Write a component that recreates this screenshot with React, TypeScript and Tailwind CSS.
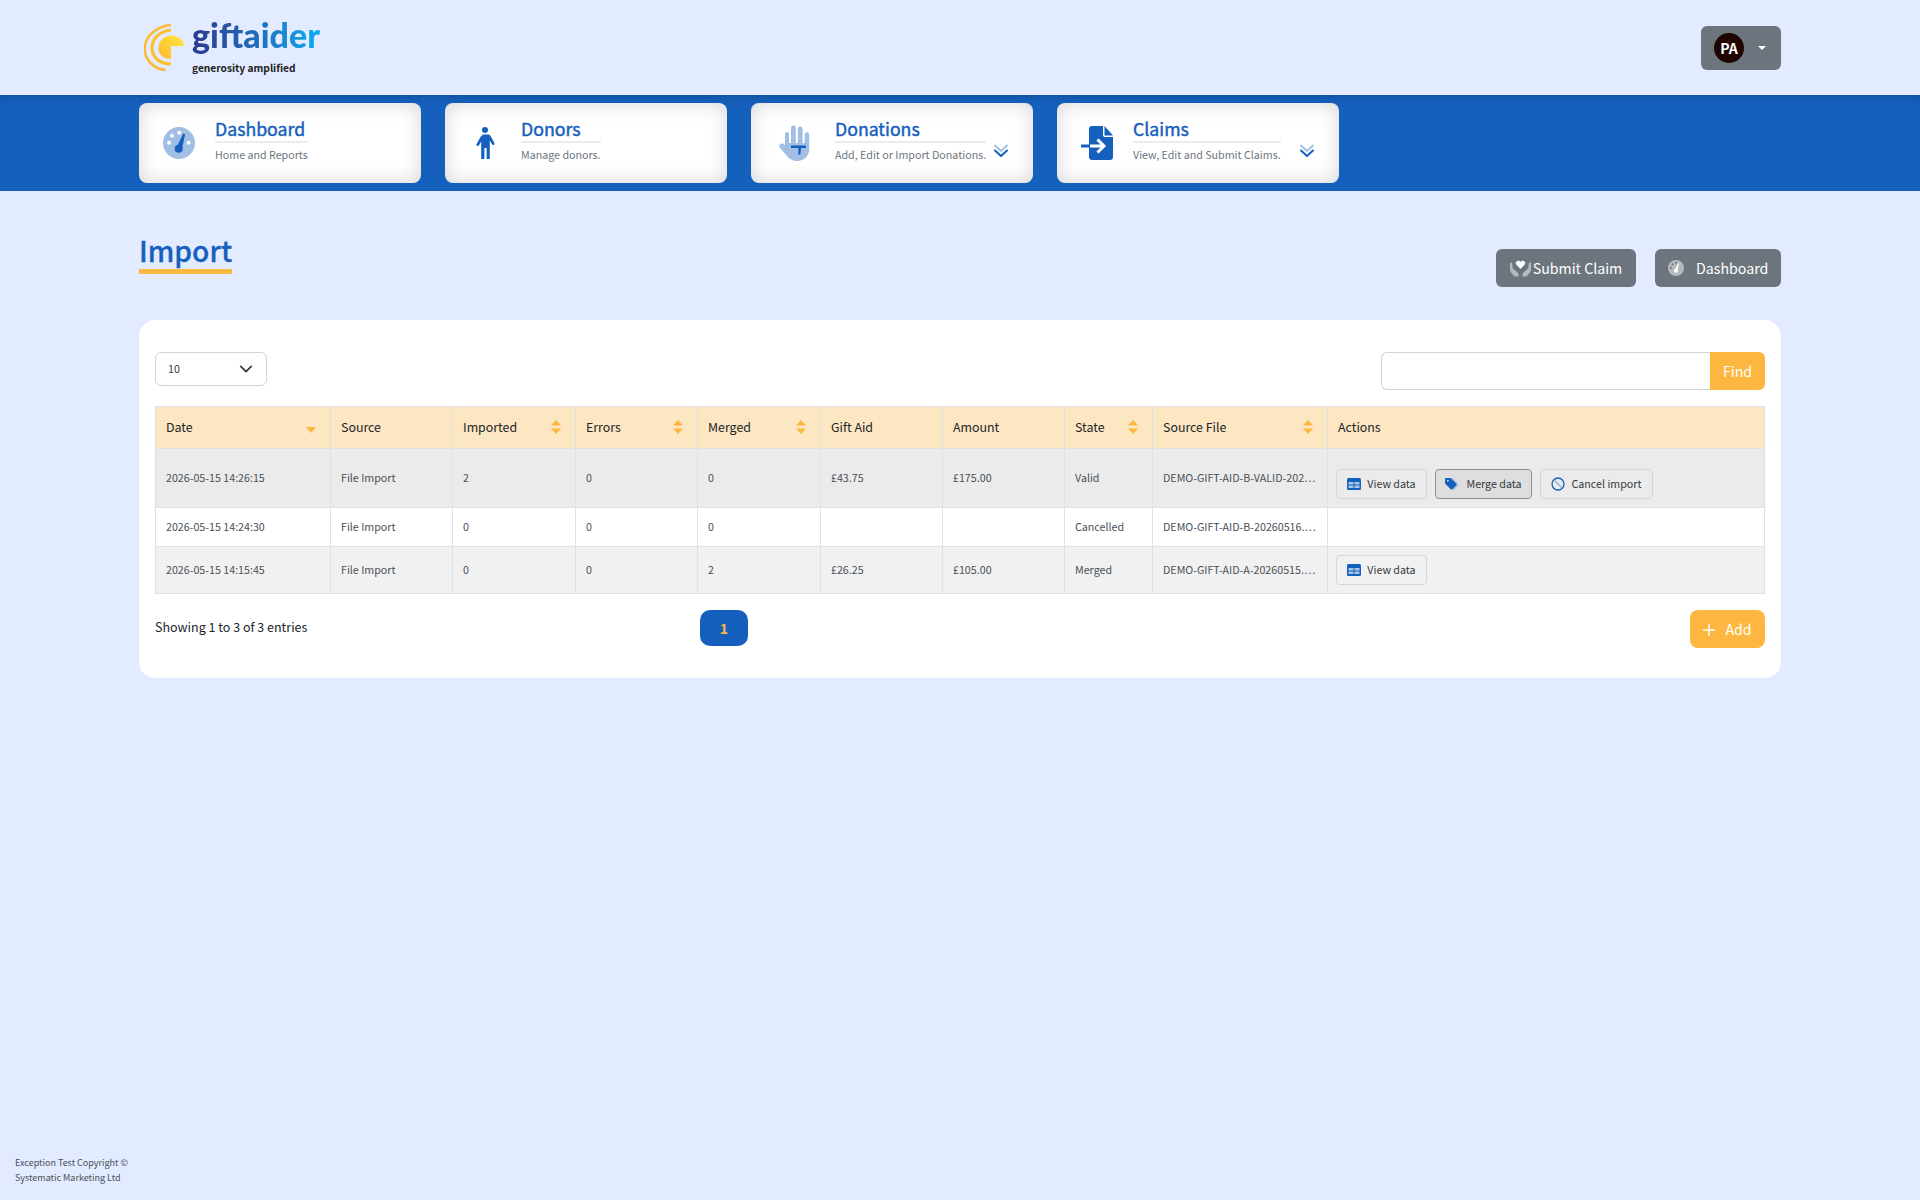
const font = "font-['Noto_Sans_CJK_SC','Noto_Sans',sans-serif]";

function Gauge({ className }: { className?: string }) {
  return (
    <svg viewBox="0 0 32 32" className={className}>
      <circle cx="16" cy="16" r="16" fill="currentColor" opacity="0.4" />
      <circle cx="9" cy="8.700" r="2" fill="#fff" />
      <circle cx="16.300" cy="5.700" r="2" fill="#fff" />
      <circle cx="6" cy="15.700" r="2" fill="#fff" />
      <circle cx="25.600" cy="15.700" r="2" fill="#fff" />
      <circle cx="15.700" cy="21.700" r="4" fill="currentColor" />
      <path d="M13.500 20.500 20.300 6.500 22.200 7.200 18.800 22.500Z" fill="currentColor" />
    </svg>
  );
}

function Person({ className }: { className?: string }) {
  return (
    <svg viewBox="0 0 20 32" className={className} fill="currentColor">
      <circle cx="10" cy="3" r="3" />
      <path d="M6.800 7.400h6.400c1 0 1.700.5 2.200 1.300l4 7.200c.4.800.2 1.600-.5 2s-1.500.1-1.900-.6l-2.200-3.700V31a1.600 1.600 0 0 1-3.200.2V21H9.400v10.200A1.600 1.600 0 0 1 6.200 31V14.600L4 18.300c-.4.700-1.200 1-1.900.6s-.9-1.200-.5-2l4-7.200c.5-.8 1.200-1.300 2.200-1.300Z" />
    </svg>
  );
}

function Hand({ className }: { className?: string }) {
  return (
    <svg viewBox="0 0 32 36" className={className}>
      <path
        opacity="0.4"
        fill="currentColor"
        d="M6 9a2 2 0 0 1 4 0v9h2V3a2.400 2.400 0 0 1 4.800 0v15h2V4a2.400 2.400 0 0 1 4.800 0v14h2V9.500a2.300 2.300 0 0 1 4.600 0V24c0 7-5 12-12 12-5 0-8.500-2.500-11-6L1 23c-1-1.500-.8-3 .5-4s3-.5 4 .7l.5.6Z"
      />
      <path fill="currentColor" d="M12 20.500h15v2.500h-5l-.6 6.500h-2.300l.4-6.500H12Z" />
    </svg>
  );
}

function FileIn({ className }: { className?: string }) {
  return (
    <svg viewBox="0 0 32 34" className={className}>
      <path fill="#1560bd" d="M11 0h11v9a2 2 0 0 0 2 2h8v20a3 3 0 0 1-3 3H11a3 3 0 0 1-3-3V3a3 3 0 0 1 3-3Z" />
      <path fill="#1560bd" d="M23.500 0 32 9.500h-8.500Z" />
      <rect x="0" y="18.500" width="9" height="3" fill="#1560bd" />
      <path d="M9 20h13M16.500 13.500 23 20l-6.500 6.500" fill="none" stroke="#fff" strokeWidth="3" />
    </svg>
  );
}

function DoubleChevron() {
  return (
    <svg viewBox="0 0 16 16" className="w-[16px] h-[16px]" fill="none" strokeWidth="2" strokeLinecap="round" strokeLinejoin="round">
      <path d="M2 2.500 8 8l6-5.500" stroke="#a4c0e6" />
      <path d="M2 7.500 8 13l6-5.500" stroke="#1560bd" />
    </svg>
  );
}

function NavCard({ icon, title, sub, chevron, wide }: { icon: React.ReactNode; title: string; sub: string; chevron?: boolean; wide?: boolean }) {
  return (
    <div className="w-[282px] h-[80px] bg-white rounded-[8px] shadow-[inset_0_0_20px_rgba(0,0,0,0.16)] flex items-center">
      <div className={"flex justify-center text-[#1560bd] " + (wide ? "w-[84px] pl-[3px]" : "w-[76px] pl-[4px]")}>{icon}</div>
      <div className="flex flex-col mt-[-6px]">
        <div className="text-[17.7px] leading-[22px] [-webkit-text-stroke:0.45px_#1560bd] text-[#1560bd] border-b-2 border-[#ececec] h-[26px]">{title}</div>
        <div className="text-[10.7px] leading-[16px] text-[#6c757d] whitespace-nowrap mt-[4px]">{sub}</div>
      </div>
      {chevron && <div className="ml-auto mr-[24px] mt-[16px]"><DoubleChevron /></div>}
    </div>
  );
}

function SortBoth() {
  return (
    <svg viewBox="0 0 10 14" className="w-[10px] h-[14px]" fill="#fdb740">
      <path d="M5 0 10 5.500H0Z" />
      <path d="M5 14 0 8.500H10Z" />
    </svg>
  );
}

function TableIcon() {
  return (
    <svg viewBox="0 0 14 12" className="w-[14px] h-[12px]">
      <rect width="14" height="12" rx="1.500" fill="#1560bd" />
      <rect x="1.500" y="4" width="5" height="2.500" fill="#a9c6ea" />
      <rect x="7.500" y="4" width="5" height="2.500" fill="#a9c6ea" />
      <rect x="1.500" y="7.500" width="5" height="2.500" fill="#a9c6ea" />
      <rect x="7.500" y="7.500" width="5" height="2.500" fill="#a9c6ea" />
    </svg>
  );
}

function TagIcon() {
  return (
    <svg viewBox="0 0 16 14" className="w-[15px] h-[13px]">
      <path d="M4 0h3l7 7-5 6" fill="none" stroke="#a4c0e6" strokeWidth="1.400" />
      <path d="M0 1a1 1 0 0 1 1-1h5l6 6a1.500 1.500 0 0 1 0 2l-4 4a1.500 1.500 0 0 1-2 0L0 6Z" fill="#1560bd" />
      <circle cx="3" cy="3" r="1" fill="#dedede" />
    </svg>
  );
}

function BanIcon() {
  return (
    <svg viewBox="0 0 14 14" className="w-[14px] h-[14px]" fill="none">
      <circle cx="7" cy="7" r="6" stroke="#1560bd" strokeWidth="1.300" />
      <path d="M3 3l8 8" stroke="#8db0de" strokeWidth="1.300" />
    </svg>
  );
}

function ActionBtn({ icon, label, active, className }: { icon: React.ReactNode; label: string; active?: boolean; className: string }) {
  return (
    <div
      className={
        "h-[30px] rounded-[4px] border flex items-center justify-center gap-[6px] text-[10.7px] text-[#343a40] " +
        (active ? "bg-[#dedede] border-[#8f8f8f] " : "border-[#d3d6da] ") +
        className
      }
    >
      {icon}
      <span>{label}</span>
    </div>
  );
}

const th = "border border-[#dee2e6] bg-[#fde6c2] text-[12.4px] font-normal text-[#212529] text-left px-[10px] p-0";
const td = "border border-[#dee2e6] text-[10.7px] text-[#495057] px-[10px] pt-[1px] pb-0 whitespace-nowrap";

function Head({ label, sort }: { label: string; sort?: "both" | "down" }) {
  return (
    <th className={th}>
      <div className="flex items-center justify-between pr-[4px]">
        <span>{label}</span>
        {sort === "both" && <SortBoth />}
        {sort === "down" && (
          <svg viewBox="0 0 10 6" className="w-[10px] h-[6px] mt-[6px]" fill="#fdb740">
            <path d="M5 6 0 0H10Z" />
          </svg>
        )}
      </div>
    </th>
  );
}

const rows = [
  { bg: "bg-[#ebebeb]", h: "h-[59px]", date: "2026-05-15 14:26:15", imp: "2", err: "0", mer: "0", gift: "£43.75", amt: "£175.00", state: "Valid", file: "DEMO-GIFT-AID-B-VALID-202…", full: true, view: true },
  { bg: "bg-white", h: "h-[39px]", date: "2026-05-15 14:24:30", imp: "0", err: "0", mer: "0", gift: "", amt: "", state: "Cancelled", file: "DEMO-GIFT-AID-B-20260516.…", full: false, view: false },
  { bg: "bg-[#f1f1f1]", h: "h-[47px]", date: "2026-05-15 14:15:45", imp: "0", err: "0", mer: "2", gift: "£26.25", amt: "£105.00", state: "Merged", file: "DEMO-GIFT-AID-A-20260515.…", full: false, view: true },
];

export default function App() {
  return (
    <div className={"min-h-[1200px] bg-[#e2ebff] flex flex-col " + font}>
      <header className="h-[95px] flex items-center justify-between px-[139px]">
        <div className="flex items-start ml-[5px] h-[47px]">
          <svg viewBox="0 0 40 47" className="w-[40px] h-[47px]">
            <defs>
              <linearGradient id="lg" x1="0" y1="1" x2="1" y2="0">
                <stop offset="0" stopColor="#fdb52e" />
                <stop offset="1" stopColor="#fde93f" />
              </linearGradient>
            </defs>
            <path d="M27 .6C12 3 .8 12 .8 25c0 11 9 20 21 21" fill="none" stroke="#fcbb38" strokeWidth="2.600" />
            <path d="M27 6C15 7.500 8 15 8 24s7 15.500 19 16" fill="none" stroke="#fcc02f" strokeWidth="3.200" />
            <path d="M27 11.500c-7 0-12.500 5.500-12.500 12.500S20 35 27 35V22h13c0-6-6-10.500-13-10.500Z" fill="url(#lg)" />
          </svg>
          <div className="ml-[8px] flex flex-col mt-[-8px]">
            <div className="font-['Lato','Noto_Sans',sans-serif] text-[34px] leading-[38px] font-black bg-gradient-to-r from-[#2b3990] via-[#1f6cba] to-[#05aef0] bg-clip-text text-transparent whitespace-nowrap w-fit">
              giftaider
            </div>
            <div className="text-[10.2px] leading-[14px] font-bold text-[#222] mt-[7px]">generosity amplified</div>
          </div>
        </div>
        <div className="w-[80px] h-[44px] bg-[#6c757d] rounded-[6px] flex items-center pl-[13px] mt-[1px]">
          <div className="w-[30px] h-[30px] rounded-full bg-[#1f0500] text-white text-[14px] font-bold flex items-center justify-center">PA</div>
          <div className="ml-[14px] w-0 h-0 border-x-[4px] border-x-transparent border-t-[4px] border-t-white" />
        </div>
      </header>

      <nav className="h-[96px] bg-[#1560bd] shadow-[inset_0_8px_8px_-6px_rgba(0,0,0,0.18)] flex items-center px-[139px] gap-[24px]">
        <NavCard icon={<Gauge className="w-[32px] h-[32px]" />} title="Dashboard" sub="Home and Reports" />
        <NavCard icon={<Person className="w-[20px] h-[32px]" />} title="Donors" sub="Manage donors." />
        <NavCard wide icon={<Hand className="w-[32px] h-[36px]" />} title="Donations" sub="Add, Edit or Import Donations." chevron />
        <NavCard icon={<FileIn className="w-[32px] h-[34px]" />} title="Claims" sub="View, Edit and Submit Claims." chevron />
      </nav>

      <main className="px-[139px] flex-1">
        <div className="flex justify-between items-start mt-[41px] h-[88px]">
          <h1 className="text-[28.2px] leading-[35px] pb-[2px] font-medium [-webkit-text-stroke:0.3px_#1560bd] text-[#1560bd] border-b-[5px] border-[#fdb93d]">Import</h1>
          <div className="flex gap-[19px] mt-[17px]">
            <div className="w-[140px] h-[38px] pt-[1px] rounded-[6px] bg-[#6c757d] text-white text-[14.2px] flex items-center justify-center gap-[2px]">
              <svg viewBox="0 0 22 18" className="w-[21px] h-[18px] mt-[-1px]">
                <path d="M0 3.500c1-.5 2 0 2.300 1l.7 5 3.500 2.800c1.500 1 2.500 2.500 2.500 4V18H5l-3-3-2-3.500Z" fill="#b4b9bd" />
                <path d="M22 3.500c-1-.5-2 0-2.300 1l-.7 5-3.500 2.800c-1.500 1-2.500 2.500-2.500 4V18h4l3-3 2-3.500Z" fill="#b4b9bd" />
                <path d="M11 10 6.800 5.700C5.500 4.200 6 2 8 1.500c1.300-.3 2.300.3 3 1.300.7-1 1.700-1.600 3-1.300 2 .5 2.500 2.700 1.200 4.200Z" fill="#fff" />
              </svg>
              <span>Submit Claim</span>
            </div>
            <div className="w-[126px] h-[38px] pt-[1px] rounded-[6px] bg-[#6c757d] text-white text-[14.2px] flex items-center pl-[13px] gap-[12px]">
              <svg viewBox="0 0 32 32" className="w-[16px] h-[16px] mt-[-1px]">
                <circle cx="16" cy="16" r="16" fill="#b4b9bd" />
                <circle cx="9" cy="8.700" r="2" fill="#6c757d" />
                <circle cx="16.300" cy="5.700" r="2" fill="#6c757d" />
                <circle cx="6" cy="15.700" r="2" fill="#6c757d" />
                <circle cx="15.700" cy="21.700" r="4" fill="#fff" />
                <path d="M13.500 20.500 20.300 6.500 22.200 7.200 18.800 22.500Z" fill="#fff" />
              </svg>
              <span>Dashboard</span>
            </div>
          </div>
        </div>

        <section className="bg-white rounded-[16px] h-[358px] px-[16px] pt-[32px]">
          <div className="flex justify-between items-start h-[54px]">
            <div className="w-[112px] h-[34px] border border-[#ced4da] rounded-[6px] flex items-center justify-between pl-[12px] pr-[13px] text-[10.7px] text-[#343a40]">
              <span>10</span>
              <svg viewBox="0 0 16 16" className="w-[14px] h-[14px]" fill="none" stroke="#343a40" strokeWidth="2" strokeLinecap="round" strokeLinejoin="round">
                <path d="m2 5 6 6 6-6" />
              </svg>
            </div>
            <div className="flex w-[384px] h-[38px]">
              <div className="flex-1 border border-[#ced4da] border-r-0 rounded-l-[6px] bg-white" />
              <div className="w-[55px] pt-[1px] bg-[#fdb740] rounded-r-[6px] text-white text-[14.2px] flex items-center justify-center">Find</div>
            </div>
          </div>

          <table className="w-[1610px] table-fixed border-collapse">
            <colgroup>
              <col className="w-[175px]" />
              <col className="w-[122px]" />
              <col className="w-[123px]" />
              <col className="w-[122px]" />
              <col className="w-[123px]" />
              <col className="w-[122px]" />
              <col className="w-[122px]" />
              <col className="w-[88px]" />
              <col className="w-[175px]" />
              <col />
            </colgroup>
            <thead>
              <tr className="h-[42px]">
                <Head label="Date" sort="down" />
                <Head label="Source" />
                <Head label="Imported" sort="both" />
                <Head label="Errors" sort="both" />
                <Head label="Merged" sort="both" />
                <Head label="Gift Aid" />
                <Head label="Amount" />
                <Head label="State" sort="both" />
                <Head label="Source File" sort="both" />
                <Head label="Actions" />
              </tr>
            </thead>
            <tbody>
              {rows.map((r) => (
                <tr key={r.date} className={r.bg + " " + r.h}>
                  <td className={td}>{r.date}</td>
                  <td className={td}>File Import</td>
                  <td className={td}>{r.imp}</td>
                  <td className={td}>{r.err}</td>
                  <td className={td}>{r.mer}</td>
                  <td className={td}>{r.gift}</td>
                  <td className={td}>{r.amt}</td>
                  <td className={td}>{r.state}</td>
                  <td className={td + " overflow-hidden"}>{r.file}</td>
                  <td className="border border-[#dee2e6] px-[8px] py-0">
                    <div className={"flex gap-[8px] " + (r.full ? "mt-[12px]" : "")}>
                      {r.view && <ActionBtn icon={<TableIcon />} label="View data" className="w-[91px]" />}
                      {r.full && <ActionBtn icon={<TagIcon />} label="Merge data" active className="w-[97px]" />}
                      {r.full && <ActionBtn icon={<BanIcon />} label="Cancel import" className="w-[113px]" />}
                    </div>
                  </td>
                </tr>
              ))}
            </tbody>
          </table>

          <div className="relative flex justify-between items-start mt-[16px]">
            <div className="text-[12.5px] leading-[20px] text-[#212529] mt-[7px]">Showing 1 to 3 of 3 entries</div>
            <div className="absolute left-[545px] top-0 w-[48px] h-[36px] rounded-[10px] bg-[#1560bd] text-[#fdb740] text-[14px] font-bold flex items-center justify-center">1</div>
            <div className="w-[75px] h-[38px] pt-[1px] rounded-[8px] bg-[#fdb740] text-white text-[14.2px] flex items-center justify-center gap-[10px]">
              <svg viewBox="0 0 12 12" className="w-[12px] h-[12px]" fill="none" stroke="#fff" strokeWidth="1.500" strokeLinecap="round">
                <path d="M6 .5v11M.5 6h11" />
              </svg>
              <span>Add</span>
            </div>
          </div>
        </section>
      </main>

      <footer className="pl-[15px] pb-[15px] w-[140px] text-[9px] leading-[15px] text-[#495057]">
        Exception Test Copyright © Systematic Marketing Ltd
      </footer>
    </div>
  );
}
